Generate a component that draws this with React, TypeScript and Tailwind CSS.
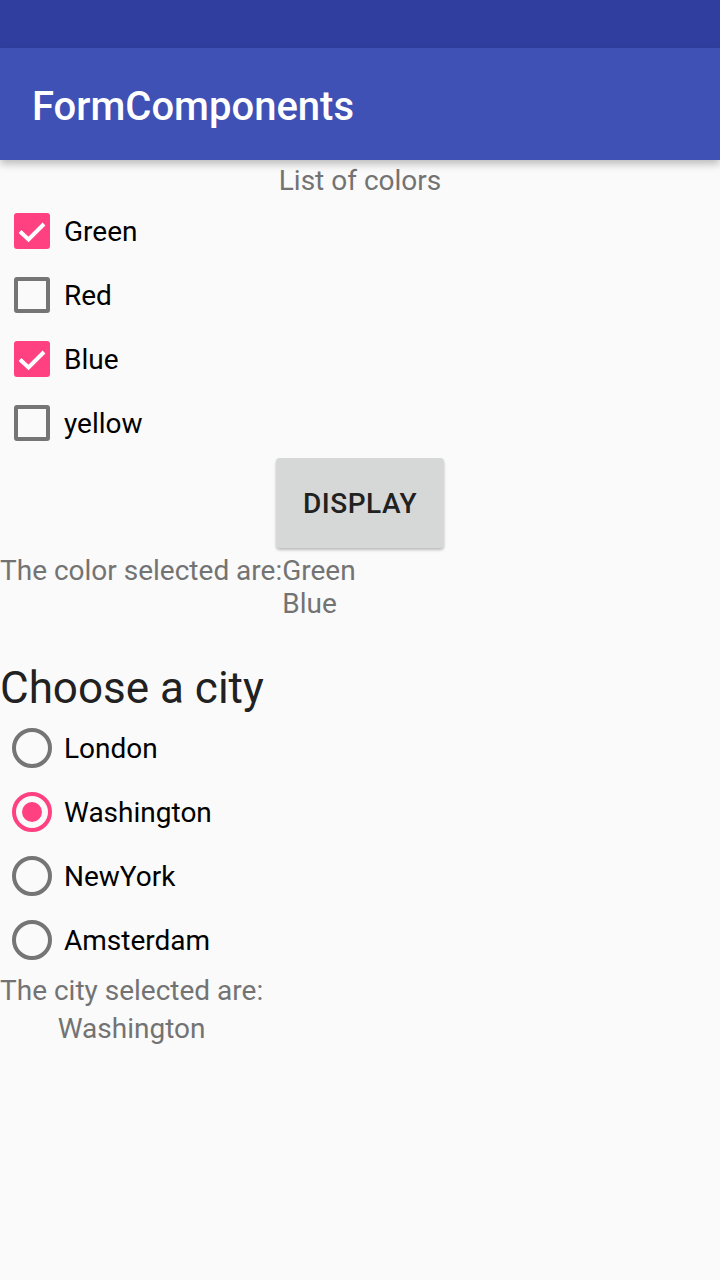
import React from "react";

const font = { fontFamily: "Roboto, 'Noto Sans', sans-serif" };

function CheckBox({ checked }: { checked: boolean }) {
  if (checked) {
    return (
      <div className="w-[36px] h-[36px] rounded-[3px] bg-[#FF4081] flex items-center justify-center">
        <svg width="36" height="36" viewBox="0 0 36 36">
          <path d="M6 18.5 L14.5 26.5 L30 11" fill="none" stroke="#ffffff" strokeWidth="4" />
        </svg>
      </div>
    );
  }
  return <div className="w-[36px] h-[36px] rounded-[3px] border-[4px] border-[#757575]" />;
}

function Radio({ checked }: { checked: boolean }) {
  return (
    <div
      className={
        "w-[40px] h-[40px] rounded-full border-[4px] flex items-center justify-center " +
        (checked ? "border-[#FF4081]" : "border-[#757575]")
      }
    >
      {checked && <div className="w-[20px] h-[20px] rounded-full bg-[#FF4081]" />}
    </div>
  );
}

export default function App() {
  const colors = [
    { name: "Green", checked: true },
    { name: "Red", checked: false },
    { name: "Blue", checked: true },
    { name: "yellow", checked: false },
  ];
  const cities = [
    { name: "London", checked: false },
    { name: "Washington", checked: true },
    { name: "NewYork", checked: false },
    { name: "Amsterdam", checked: false },
  ];
  return (
    <div className="w-[720px] h-[1280px] bg-[#FAFAFA] overflow-hidden" style={font}>
      <div className="h-[48px] bg-[#303F9F]" />
      <div className="relative z-10 h-[112px] bg-[#3F51B5] flex items-center pl-[32px] pt-[6px] shadow-[0_4px_8px_rgba(0,0,0,0.25)]">
        <span className="text-white text-[40px] font-medium leading-none">FormComponents</span>
      </div>
      <div className="h-[39px] flex items-center justify-center text-[28px] text-[#737373] pt-[2px]">
        List of colors
      </div>
      <div className="flex flex-col">
        {colors.map((c) => (
          <div key={c.name} className="h-[64px] flex items-center">
            <div className="w-[64px] pl-[14px]">
              <CheckBox checked={c.checked} />
            </div>
            <span className="text-[28px] text-black leading-none pt-[2px]">{c.name}</span>
          </div>
        ))}
      </div>
      <div className="h-[96px] flex items-center justify-center">
        <div className="w-[168px] h-[90px] rounded-[4px] bg-[#D6D7D7] shadow-[0_2px_3px_rgba(0,0,0,0.25)] flex items-center justify-center">
          <span className="text-[28px] font-medium text-[#212121] tracking-[0.5px] pt-[2px]">DISPLAY</span>
        </div>
      </div>
      <div className="flex text-[28px] leading-[33px] text-[#737373] pt-[3px]">
        <span>The color selected are:</span>
        <div className="flex flex-col">
          <span>Green</span>
          <span>Blue</span>
        </div>
      </div>
      <div className="mt-[42px] text-[44px] leading-[52px] text-[#212121]">Choose a city</div>
      <div className="flex flex-col mt-[2px]">
        {cities.map((c) => (
          <div key={c.name} className="h-[64px] flex items-center">
            <div className="w-[64px] pl-[12px]">
              <Radio checked={c.checked} />
            </div>
            <span className="text-[28px] text-black leading-none pt-[2px]">{c.name}</span>
          </div>
        ))}
      </div>
      <div className="inline-flex flex-col items-center text-[28px] leading-[38px] text-[#737373]">
        <span>The city selected are:</span>
        <span>Washington</span>
      </div>
    </div>
  );
}
